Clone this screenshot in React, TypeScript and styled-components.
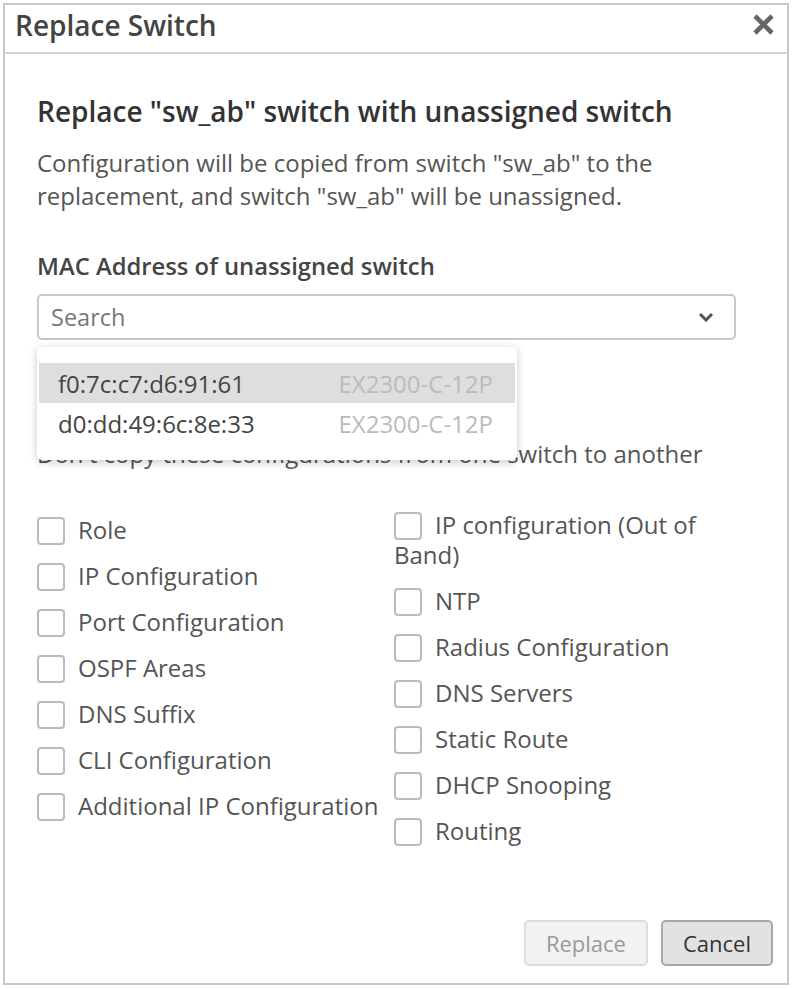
import React from "react";
import styled, { createGlobalStyle } from "styled-components";

const GlobalStyle = createGlobalStyle`
  html, body {
    margin: 0;
    padding: 0;
    background: #fff;
  }
  body {
    font-family: "Open Sans", "Noto Sans", sans-serif;
    color: #555;
  }
`;

const leftItems = [
  "Role",
  "IP Configuration",
  "Port Configuration",
  "OSPF Areas",
  "DNS Suffix",
  "CLI Configuration",
  "Additional IP Configuration",
];

const rightItems = [
  "IP configuration (Out of Band)",
  "NTP",
  "Radius Configuration",
  "DNS Servers",
  "Static Route",
  "DHCP Snooping",
  "Routing",
];

const options = [
  { mac: "f0:7c:c7:d6:91:61", model: "EX2300-C-12P", active: true },
  { mac: "d0:dd:49:6c:8e:33", model: "EX2300-C-12P", active: false },
];

const App: React.FC = () => {
  return (
    <Page>
      <GlobalStyle />
      <Dialog>
        <Header>
          <Title>Replace Switch</Title>
          <CloseButton aria-label="close">
            <svg width="23" height="23" viewBox="0 0 23 23">
              <path
                d="M3 3 L20 20 M20 3 L3 20"
                stroke="#666"
                strokeWidth="4.6"
                strokeLinecap="butt"
              />
            </svg>
          </CloseButton>
        </Header>

        <Body>
          <Heading>Replace "sw_ab" switch with unassigned switch</Heading>
          <Text>
            Configuration will be copied from switch "sw_ab" to the
            replacement, and switch "sw_ab" will be unassigned.
          </Text>

          <FieldLabel>MAC Address of unassigned switch</FieldLabel>
          <SelectWrap>
            <Select>
              <Placeholder>Search</Placeholder>
              <svg width="16" height="10" viewBox="0 0 16 10">
                <polyline
                  points="2,2 8,8 14,2"
                  fill="none"
                  stroke="#555"
                  strokeWidth="3"
                />
              </svg>
            </Select>
            <Menu>
              {options.map((o) => (
                <Option key={o.mac} active={o.active}>
                  <span>{o.mac}</span>
                  <Model>{o.model}</Model>
                </Option>
              ))}
            </Menu>
          </SelectWrap>

          <Description>
            Don't copy these configurations from one switch to another
          </Description>

          <Columns>
            <Column offset={4}>
              {leftItems.map((t) => (
                <Item key={t}>
                  <Box />
                  {t}
                </Item>
              ))}
            </Column>
            <Column offset={-1}>
              {rightItems.map((t) => (
                <Item key={t}>
                  <Box />
                  {t}
                </Item>
              ))}
            </Column>
          </Columns>
        </Body>

        <Footer>
          <Button disabledLook>Replace</Button>
          <Button>Cancel</Button>
        </Footer>
      </Dialog>
    </Page>
  );
};

export default App;

const Page = styled.div`
  padding: 3px;
  width: 795px;
  box-sizing: border-box;
`;

const Dialog = styled.div`
  width: 786px;
  height: 982px;
  box-sizing: border-box;
  border: 2px solid #c8c8c8;
  display: flex;
  flex-direction: column;
  background: #fff;
`;

const Header = styled.div`
  height: 49px;
  box-sizing: border-box;
  border-bottom: 2px solid #d0d0d0;
  display: flex;
  align-items: center;
  justify-content: space-between;
  padding: 0 12px 8px 10px;
`;

const Title = styled.div`
  font-size: 28px;
  line-height: 36px;
  font-weight: 600;
  color: #444;
`;

const CloseButton = styled.div`
  display: flex;
  cursor: pointer;
`;

const Body = styled.div`
  padding: 41px 51px 0 32px;
  display: flex;
  flex-direction: column;
`;

const Heading = styled.div`
  font-size: 28px;
  line-height: 32px;
  font-weight: 600;
  color: #333;
  margin-bottom: 19px;
`;

const Text = styled.div`
  font-size: 24px;
  line-height: 33px;
  color: #555;
  margin-bottom: 40px;
`;

const FieldLabel = styled.div`
  font-size: 23.8px;
  line-height: 28px;
  font-weight: 600;
  color: #444;
  margin-bottom: 14px;
`;

const SelectWrap = styled.div`
  position: relative;
`;

const Select = styled.div`
  height: 46px;
  box-sizing: border-box;
  border: 2px solid #c8c8c8;
  border-radius: 5px;
  display: flex;
  align-items: center;
  justify-content: space-between;
  padding: 0 20px 0 12px;
`;

const Placeholder = styled.span`
  font-size: 23.5px;
  color: #777;
`;

const Menu = styled.div`
  position: absolute;
  top: 53px;
  left: 0;
  width: 480px;
  box-sizing: border-box;
  padding: 16px 2px 17px;
  background: #fff;
  border-radius: 5px;
  box-shadow: 0 2px 8px rgba(0, 0, 0, 0.22);
  z-index: 2;
`;

const Option = styled.div<{ active: boolean }>`
  height: 40px;
  display: flex;
  align-items: center;
  justify-content: space-between;
  padding: 0 22px 0 19px;
  font-size: 24px;
  color: #444;
  background: ${({ active }) => (active ? "#dedede" : "transparent")};
`;

const Model = styled.span`
  color: #bbb;
`;

const Description = styled.div`
  font-size: 24px;
  line-height: 30px;
  color: #555;
  margin-top: 99px;
`;

const Columns = styled.div`
  display: grid;
  grid-template-columns: 357px 1fr;
  margin-top: 42px;
`;

const Column = styled.div<{ offset: number }>`
  margin-top: ${({ offset }) => offset}px;
  display: flex;
  flex-direction: column;
  gap: 16px;
`;

const Item = styled.div`
  font-size: 24px;
  line-height: 30px;
  color: #555;
`;

const Box = styled.span`
  display: inline-block;
  width: 28px;
  height: 28px;
  box-sizing: border-box;
  border: 2px solid #bbb;
  border-radius: 4px;
  vertical-align: -6px;
  margin-right: 13px;
  background: #fff;
`;

const Footer = styled.div`
  margin-top: auto;
  display: flex;
  justify-content: flex-end;
  gap: 13px;
  padding: 0 14px 17px 0;
`;

const Button = styled.button<{ disabledLook?: boolean }>`
  height: 46px;
  box-sizing: border-box;
  padding: 0 20px;
  font-family: "Open Sans", "Noto Sans", sans-serif;
  font-size: 22px;
  border-radius: 5px;
  border: 2px solid ${({ disabledLook }) => (disabledLook ? "#dcdcdc" : "#a8a8a8")};
  background: ${({ disabledLook }) => (disabledLook ? "#f2f2f2" : "#e2e2e2")};
  color: ${({ disabledLook }) => (disabledLook ? "#999" : "#333")};
  cursor: pointer;
`;
